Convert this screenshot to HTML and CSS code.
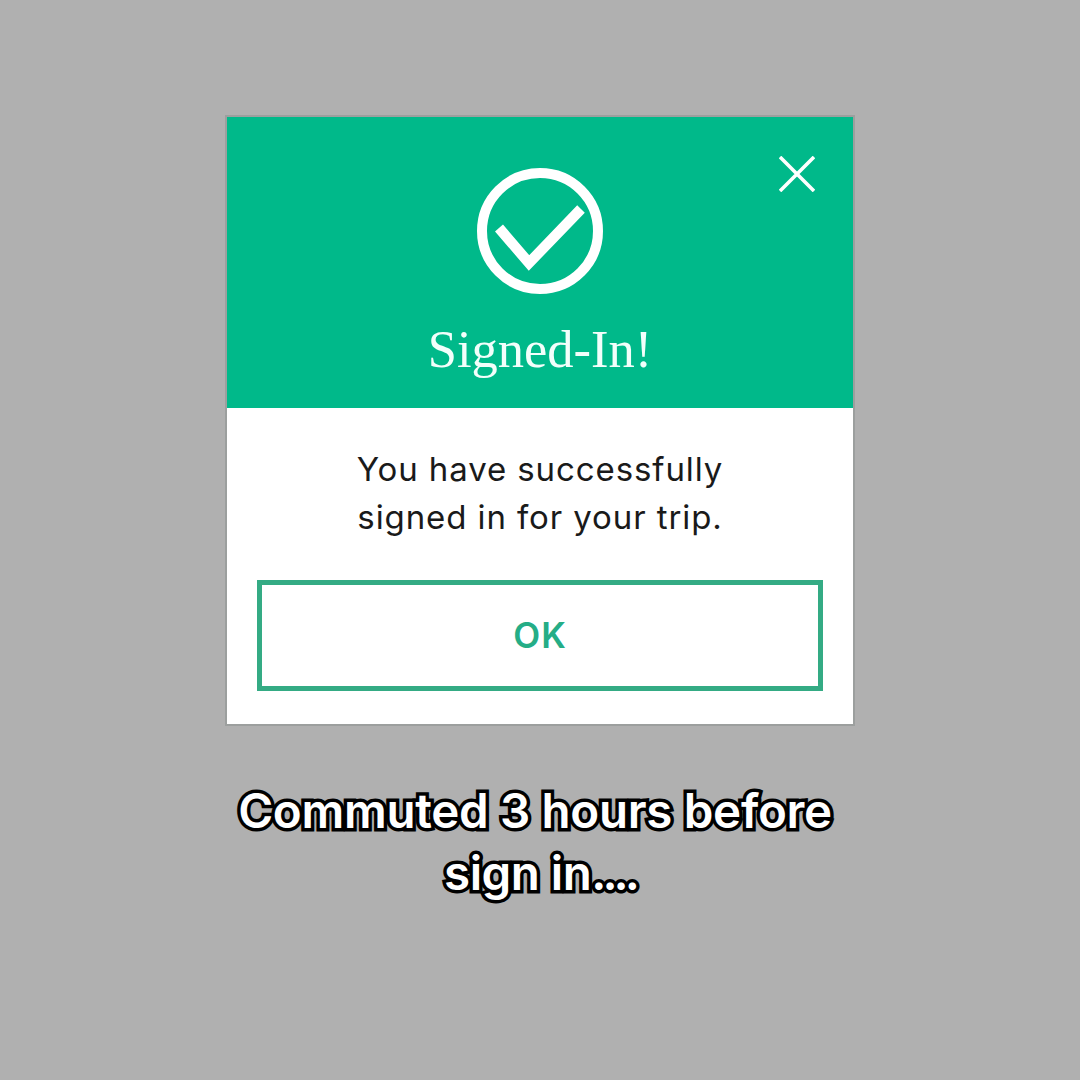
FILE: index.html
```html
<!DOCTYPE html>
<html lang="en">
<head>
<meta charset="utf-8">
<title>Signed-In</title>
<link rel="stylesheet" href="styles.css">
</head>
<body>
<main class="page">
  <section class="card">
    <header class="card-head">
      <svg class="close" viewBox="0 0 36 36" width="36" height="36" aria-label="Close">
        <path d="M1 1 L35 35 M35 1 L1 35" fill="none" stroke="#fff" stroke-width="3.6"/>
      </svg>
      <svg class="tick" viewBox="0 0 128 128" width="128" height="128">
        <circle cx="64" cy="63" r="58" fill="none" stroke="#fff" stroke-width="10"/>
        <path d="M23 60 L53 95 L105 41" fill="none" stroke="#fff" stroke-width="10.5"/>
      </svg>
      <h1 class="title">Signed-In!</h1>
    </header>
    <div class="card-body">
      <p class="message">You have successfully<br>signed in for your trip.</p>
      <button class="ok" type="button">OK</button>
    </div>
  </section>
  <p class="caption"><span class="line-one">Commuted 3 hours before</span><span class="line-two">sign in<span class="dots">....</span></span></p>
</main>
</body>
</html>
```
FILE: styles.css
```css
* { box-sizing: border-box; }
html, body { margin: 0; height: 100%; }
body { background: #b0b0b0; }
.page {
  display: flex;
  flex-direction: column;
  align-items: center;
  height: 1080px;
  padding-top: 115px;
}
.card {
  width: 630px;
  height: 611px;
  border: 2px solid #9c9f9e;
  background: #fff;
  display: flex;
  flex-direction: column;
}
.card-head {
  position: relative;
  height: 291px;
  background: #00b98a;
  display: flex;
  flex-direction: column;
  align-items: center;
  padding-top: 51px;
}
.close { position: absolute; top: 39px; right: 38px; }
.tick { display: block; }
.title {
  margin: 22px 0 0;
  font: 400 52.5px/62px "Liberation Serif", serif;
  color: #f2fffb;
}
.card-body {
  flex: 1;
  display: flex;
  flex-direction: column;
  align-items: center;
  padding: 37px 31px 0;
}
.message {
  margin: 0;
  font: 400 33px/48px Inter, "Liberation Sans", sans-serif;
  letter-spacing: 0.9px;
  text-align: center;
  color: #1a1a1a;
}
.ok {
  margin-top: 39px;
  width: 566px;
  height: 111px;
  border: 5px solid #34ab84;
  background: #fff;
  font: 600 35px/1 Inter, "Liberation Sans", sans-serif;
  letter-spacing: 1px;
  color: #25ad86;
  padding: 0;
}
.caption {
  margin: 54px 0 0;
  font: 600 47.5px/62px Inter, "Liberation Sans", sans-serif;
  text-align: center;
  color: #fff;
  letter-spacing: -0.3px;
  -webkit-text-stroke: 7px #000;
  paint-order: stroke fill;
}
.line-one { display: block; padding-right: 10px; }
.line-two { display: block; letter-spacing: -0.5px; }
.dots { letter-spacing: -4px; }
```
